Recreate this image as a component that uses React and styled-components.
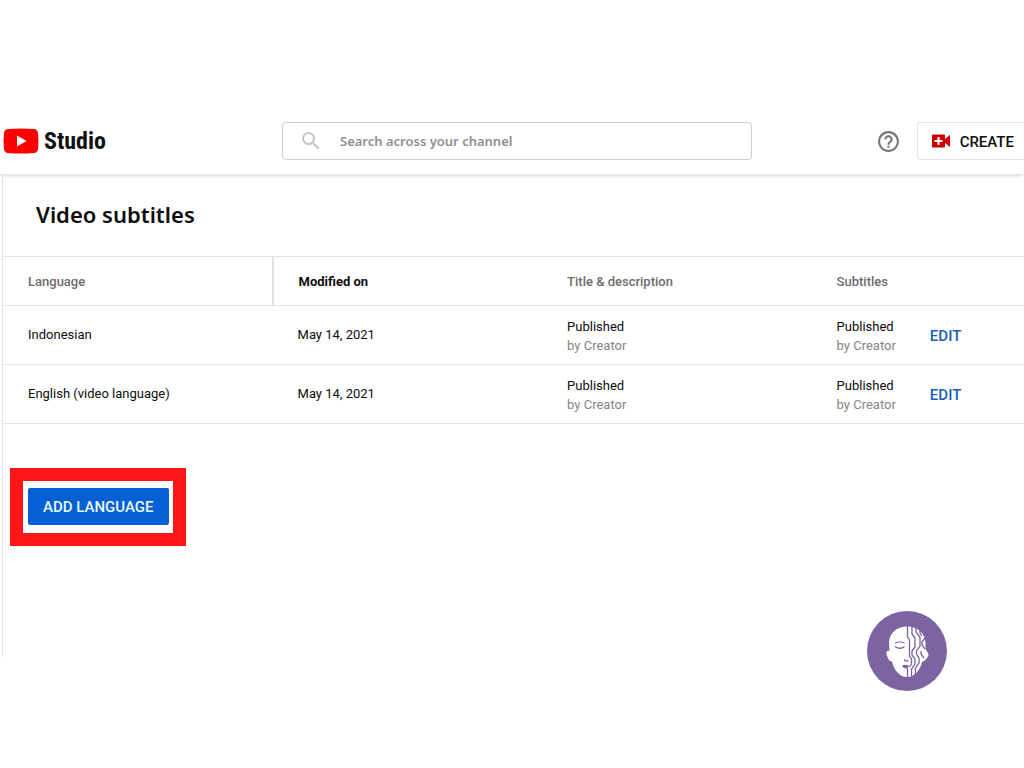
import React from 'react';
import styled, { createGlobalStyle } from 'styled-components';

const GlobalStyle = createGlobalStyle`
  * { box-sizing: border-box; }
  body {
    margin: 0;
    background: #fff;
    color: #0d0d0d;
    font-family: Roboto, "Liberation Sans", sans-serif;
    font-size: 13px;
    line-height: 19px;
  }
  button, input { font: inherit; }
`;

const Page = styled.div`
  position: relative;
  min-height: 100vh;
  padding-top: 108px;
  overflow: hidden;
`;

const Header = styled.header`
  display: grid;
  grid-template-columns: minmax(110px, 279px) minmax(200px, 470px) 1fr;
  align-items: center;
  height: 67px;
  padding-left: 3px;
  border-bottom: 1px solid #e9e9e9;
  box-shadow: 0 3px 3px -2px rgba(0, 0, 0, 0.15);
`;

const Brand = styled.a`
  display: flex;
  align-items: center;
  gap: 5px;
  color: #111;
  text-decoration: none;
  font-family: "Roboto Condensed", Roboto, sans-serif;
  font-size: 24px;
  font-weight: 700;
  line-height: 32px;
`;

const SearchBox = styled.label`
  display: flex;
  align-items: center;
  gap: 17px;
  height: 38px;
  padding: 0 16px;
  border: 1px solid #ccc;
  border-radius: 4px;
`;

const SearchInput = styled.input`
  flex: 1;
  min-width: 0;
  padding: 0;
  border: 0;
  outline: 0;
  background: none;
  font-family: "Noto Sans", sans-serif;
  font-size: 13px;
  font-weight: 600;
  &::placeholder { color: #8f8f8f; opacity: 1; }
`;

const Actions = styled.div`
  display: flex;
  align-items: center;
  justify-content: flex-end;
  gap: 16px;
`;

const IconButton = styled.button`
  display: flex;
  padding: 0;
  border: 0;
  background: none;
  cursor: pointer;
`;

const CreateButton = styled.button`
  display: flex;
  align-items: center;
  gap: 8px;
  height: 38px;
  padding: 0 10px 0 12px;
  border: 1px solid #e5e5e5;
  border-right: 0;
  border-radius: 3px 0 0 3px;
  background: #fff;
  color: #0d0d0d;
  font-size: 15px;
  font-weight: 500;
  cursor: pointer;
`;

const ButtonLabel = styled.span`
  padding-top: 2px;
`;

const Panel = styled.main`
  min-height: 482px;
  margin-left: 2px;
  border-left: 1px solid #e3e3e3;
`;

const Title = styled.h1`
  margin: 0;
  padding: 24px 33px 26px;
  font-family: "Noto Sans", sans-serif;
  font-size: 22px;
  font-weight: 600;
  line-height: 31px;
`;

const Table = styled.table`
  width: 100%;
  table-layout: fixed;
  border-collapse: collapse;
  border-top: 1px solid #e3e3e3;
`;

const Row = styled.tr`
  height: ${(p) => (p.$head ? 49 : 59)}px;
  border-bottom: 1px solid #e3e3e3;
`;

const HeadCell = styled.th`
  width: ${(p) => p.$width || 'auto'};
  padding: 0 0 0 25px;
  border-right: ${(p) => (p.$divider ? '2px solid #e3e3e3' : '0')};
  color: ${(p) => (p.$active ? '#0d0d0d' : '#6c6c6c')};
  font-weight: ${(p) => (p.$active ? 700 : 500)};
  text-align: left;
`;

const Cell = styled.td`
  padding: 0 0 2px 25px;
`;

const StatusGroup = styled.div`
  display: flex;
  align-items: center;
  gap: 34px;
`;

const StatusText = styled.div`
  padding-top: 3px;
`;

const Author = styled.div`
  color: #858585;
`;

const EditButton = styled.button`
  padding: 4px 0 0;
  border: 0;
  background: none;
  color: #1a5fb8;
  font-size: 15px;
  font-weight: 500;
  cursor: pointer;
`;

const Highlight = styled.div`
  width: fit-content;
  margin: 44px 0 0 7px;
  padding: 7px 4px 8px 5px;
  border: 13px solid #ff1616;
`;

const AddButton = styled.button`
  display: block;
  height: 37px;
  padding: 2px 15px 0;
  border: 0;
  border-radius: 2px;
  background: #065fd4;
  color: #e8fbff;
  font-size: 15px;
  font-weight: 500;
  cursor: pointer;
`;

const Badge = styled.div`
  position: absolute;
  right: 77px;
  bottom: 77px;
  width: 80px;
  height: 80px;
`;

const rows = [
  { language: 'Indonesian', modified: 'May 14, 2021' },
  { language: 'English (video language)', modified: 'May 14, 2021' },
];

function Status() {
  return (
    <StatusText>
      <div>Published</div>
      <Author>by Creator</Author>
    </StatusText>
  );
}

function PlayLogo() {
  return (
    <svg width="36" height="26" viewBox="0 0 36 26" aria-hidden="true">
      <path d="M5 1Q18 0 31 1Q34.5 1.300 35 5Q36 13 35 21Q34.500 24.700 31 25Q18 26 5 25Q1.500 24.700 1 21Q0 13 1 5Q1.500 1.300 5 1Z" fill="#f00" />
      <path d="M14 7.500L23.500 13L14 18.500Z" fill="#fff" />
    </svg>
  );
}

function SearchIcon() {
  return (
    <svg width="24" height="24" viewBox="0 0 24 24" aria-hidden="true">
      <path fill="#c4c4c4" d="M15.500 14h-.79l-.28-.27A6.471 6.471 0 0 0 16 9.500 6.500 6.500 0 1 0 9.500 16c1.610 0 3.090-.59 4.230-1.570l.27.28v.79l5 4.990L20.490 19l-4.990-5zm-6 0C7.010 14 5 11.990 5 9.500S7.010 5 9.500 5 14 7.010 14 9.500 11.990 14 9.500 14z" />
    </svg>
  );
}

function HelpIcon() {
  return (
    <svg width="25" height="25" viewBox="0 0 24 24" aria-hidden="true">
      <path fill="#757575" d="M11 18h2v-2h-2v2zm1-16C6.480 2 2 6.480 2 12s4.480 10 10 10 10-4.480 10-10S17.520 2 12 2zm0 18c-4.410 0-8-3.590-8-8s3.590-8 8-8 8 3.590 8 8-3.590 8-8 8zm0-14c-2.210 0-4 1.790-4 4h2c0-1.100.9-2 2-2s2 .9 2 2c0 2-3 1.750-3 5h2c0-2.250 3-2.500 3-5 0-2.210-1.790-4-4-4z" />
    </svg>
  );
}

function CameraIcon() {
  return (
    <svg width="22" height="22" viewBox="0 0 22 22" aria-hidden="true">
      <path fill="#c00" d="M3 4.500h11q1 0 1 1V9l5-4v12l-5-4v3.500q0 1-1 1H3q-1 0-1-1v-11q0-1 1-1z" />
      <path d="M8.500 7v8M4.500 11h8" stroke="#fff" strokeWidth="2" />
    </svg>
  );
}

function FaceLogo() {
  return (
    <svg width="80" height="80" viewBox="0 0 80 80" role="img" aria-label="Face logo">
      <circle cx="40" cy="40" r="40" fill="#7c64a2" />
      <path fill="#fff" d="M40 15.500C30 15.500 22 22 22 32L22.500 40C19 38.500 19 43 20.500 46C21.500 49 23 50.500 25 50.500C26.500 58 32 66 40 66C48 66 53.500 58 55 51C58 50 61.500 46 61.500 43L58.500 38V32C58.500 22 50 15.500 40 15.500Z" />
      <g fill="none" stroke="#7c64a2" strokeWidth="1.300">
        <path d="M28 35.500Q33 39 37.500 35.500" />
        <path strokeWidth="1" d="M28 32Q33 29.500 37.500 32" />
        <path d="M37 48.500Q39 51 41.500 49.500" />
        <path d="M40.500 15V26L42.500 29V45L44.500 48V53L42.500 56" />
        <path d="M40.500 57V66" />
        <path d="M45 16V23L48 27V36L45 40V44L48 48V53L44.500 58V65" />
        <path d="M49 17V21L53 26V35L49.500 40V43L52 47V52L48.500 57V63" />
        <path d="M53 19V22L55 25M58 27L55 31V34L58 38M54 40V43L57 47" />
      </g>
      <path fill="#7c64a2" d="M35 55Q37.500 53 39 54Q41 53.500 42 55Q40 58 38 57.500Q36.500 57 35 55Z" />
    </svg>
  );
}

export default function App() {
  return (
    <Page>
      <GlobalStyle />
      <Header>
        <Brand href="#">
          <PlayLogo />
          Studio
        </Brand>
        <SearchBox>
          <SearchIcon />
          <SearchInput type="text" aria-label="Search" placeholder="Search across your channel" />
        </SearchBox>
        <Actions>
          <IconButton type="button" aria-label="Help">
            <HelpIcon />
          </IconButton>
          <CreateButton type="button">
            <CameraIcon />
            <ButtonLabel>CREATE</ButtonLabel>
          </CreateButton>
        </Actions>
      </Header>
      <Panel>
        <Title>Video subtitles</Title>
        <Table>
          <thead>
            <Row $head>
              <HeadCell scope="col" $width="26.4%" $divider>Language</HeadCell>
              <HeadCell scope="col" $width="26.4%" $active>Modified on</HeadCell>
              <HeadCell scope="col" $width="26.4%">Title &amp; description</HeadCell>
              <HeadCell scope="col">Subtitles</HeadCell>
            </Row>
          </thead>
          <tbody>
            {rows.map((row) => (
              <Row key={row.language}>
                <Cell>{row.language}</Cell>
                <Cell>{row.modified}</Cell>
                <Cell><Status /></Cell>
                <Cell>
                  <StatusGroup>
                    <Status />
                    <EditButton type="button">EDIT</EditButton>
                  </StatusGroup>
                </Cell>
              </Row>
            ))}
          </tbody>
        </Table>
        <Highlight>
          <AddButton type="button">ADD LANGUAGE</AddButton>
        </Highlight>
      </Panel>
      <Badge>
        <FaceLogo />
      </Badge>
    </Page>
  );
}
